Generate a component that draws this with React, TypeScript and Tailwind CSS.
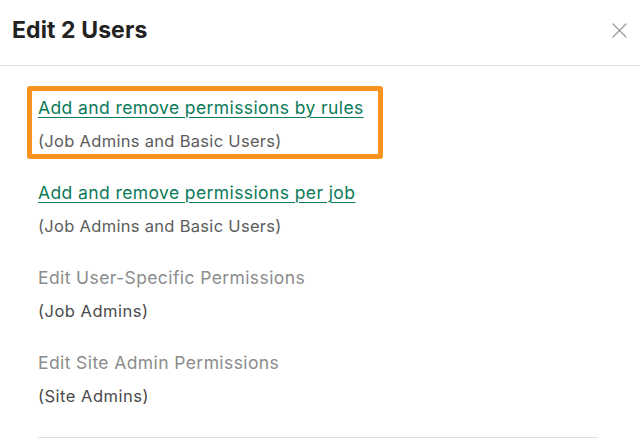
import React from "react";

type Item = {
  title: string;
  sub: string;
  enabled: boolean;
  highlight?: boolean;
};

const items: Item[] = [
  {
    title: "Add and remove permissions by rules",
    sub: "(Job Admins and Basic Users)",
    enabled: true,
    highlight: true,
  },
  {
    title: "Add and remove permissions per job",
    sub: "(Job Admins and Basic Users)",
    enabled: true,
  },
  {
    title: "Edit User-Specific Permissions",
    sub: "(Job Admins)",
    enabled: false,
  },
  {
    title: "Edit Site Admin Permissions",
    sub: "(Site Admins)",
    enabled: false,
  },
];

const CloseIcon = () => (
  <svg width="15" height="15" viewBox="0 0 15 15" fill="none">
    <path
      d="M1 1L14 14M14 1L1 14"
      stroke="#9b9b9b"
      strokeWidth="1.3"
      strokeLinecap="round"
    />
  </svg>
);

const App: React.FC = () => {
  return (
    <div
      className="w-[640px] h-[440px] overflow-hidden bg-white"
      style={{ fontFamily: "Inter, 'Noto Sans', sans-serif" }}
    >
      {/* HEADER */}
      <div className="flex items-center justify-between h-[66px] pl-3 pr-[13px] pb-[4px] border-b border-[#e3e3e3]">
        <h2 className="text-[23px] font-bold tracking-[0.1px] text-[#222]">
          Edit 2 Users
        </h2>
        <button className="p-0">
          <CloseIcon />
        </button>
      </div>

      {/* BODY */}
      <div className="pl-[38px] pr-[42px] pt-[30px]">
        <div className="flex flex-col gap-[28px]">
          {items.map((item) => (
            <div key={item.title} className="relative flex flex-col gap-[9px]">
              {item.highlight && (
                <div className="absolute -left-[11px] -top-[10px] w-[356px] h-[73px] border-[5px] border-[#f7931e] rounded-[3px]" />
              )}
              {item.enabled ? (
                <a
                  href="#"
                  className="text-[17.5px] leading-[24px] text-[#0a7a59] underline underline-offset-[3px] decoration-[1px] tracking-[0.4px] w-fit"
                >
                  {item.title}
                </a>
              ) : (
                <span className="text-[17.5px] leading-[24px] text-[#8c8c8c] tracking-[0.4px]">
                  {item.title}
                </span>
              )}
              <span
                className={
                  item.enabled
                    ? "text-[16.5px] leading-[24px] text-[#5c5c5c] tracking-[0.3px]"
                    : "text-[16.5px] leading-[24px] text-[#4a4a4a] tracking-[0.5px]"
                }
              >
                {item.sub}
              </span>
            </div>
          ))}
        </div>
        <div className="mt-[29px] border-t border-[#dedede]" />
      </div>
    </div>
  );
};

export default App;
